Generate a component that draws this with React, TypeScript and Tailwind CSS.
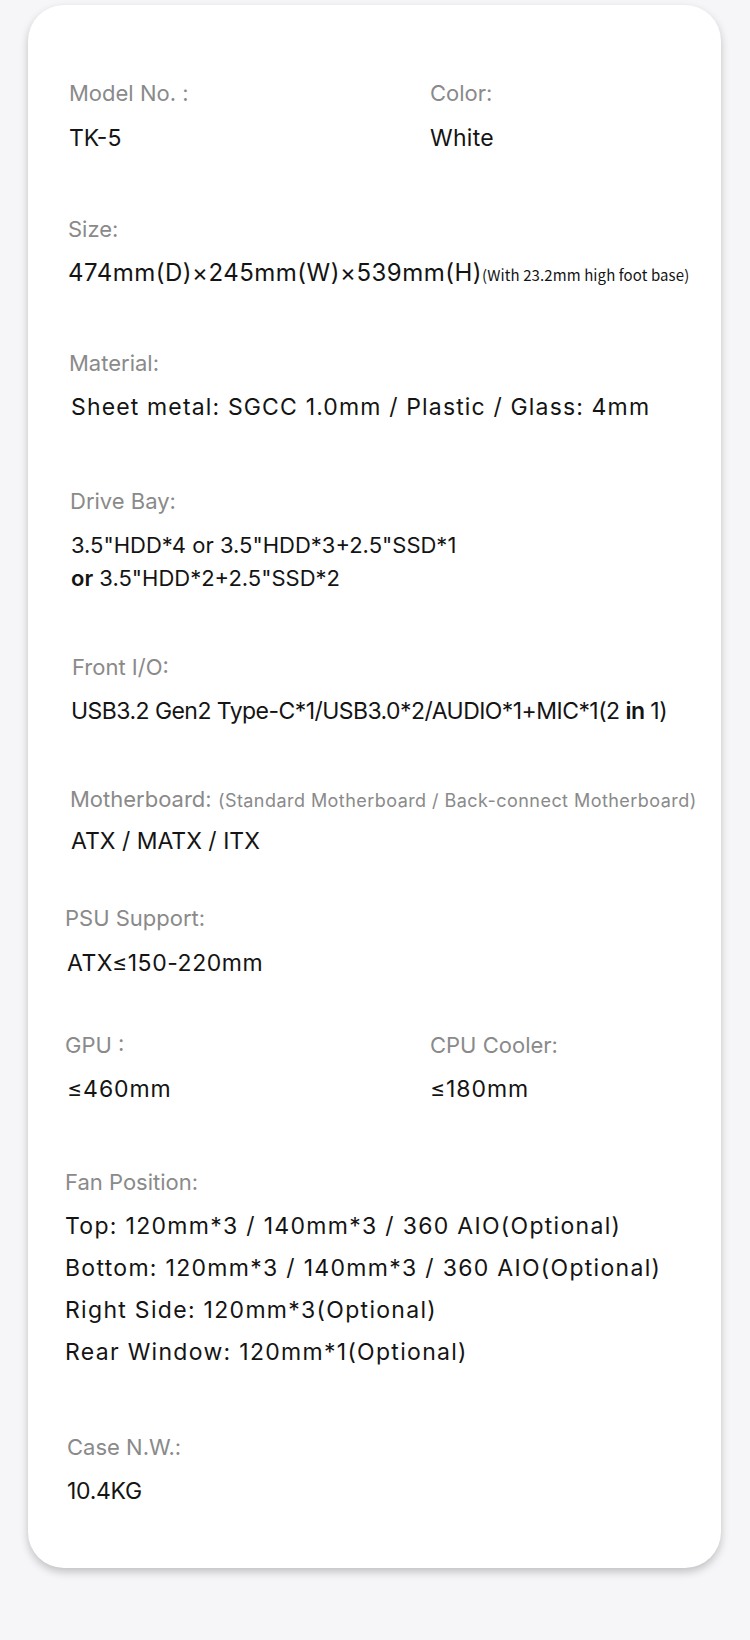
import React from 'react'

const label = "text-[22px] leading-[28px] text-[#8a8a8a]"
const value = "text-[23px] leading-[32px] text-[#141414]"

interface SpecProps {
  title: React.ReactNode
  lines: React.ReactNode[]
  className?: string
  titleClass?: string
  valueClass?: string
}

const Spec: React.FC<SpecProps> = ({ title, lines, className = "", titleClass = "", valueClass = "mt-[14px]" }) => {
  return (
    <div className={className}>
      <div className={`${label} ${titleClass}`}>{title}</div>
      <div className={valueClass}>
        {lines.map((l, i) => (
          <div key={i} className={value}>{l}</div>
        ))}
      </div>
    </div>
  )
}

export default function App() {
  return (
    <div className="min-h-[1640px] w-full bg-[#f6f6f9] pt-[5px] font-['Inter','Noto_Sans',sans-serif]">
      <div className="ml-[28px] w-[693px] rounded-[36px] bg-white pt-[74px] pb-[61px] pl-[41px] shadow-[0_4px_8px_rgba(0,0,0,0.22)]">
        <div className="flex">
          <div className="w-[361px]">
            <div className={label}>Model No. :</div>
            <div className={`${value} mt-[15px]`}>TK-5</div>
          </div>
          <div>
            <div className={label}>Color:</div>
            <div className={`${value} mt-[15px] tracking-[0.3px]`}>White</div>
          </div>
        </div>

        <div className="mt-[61px] -ml-[1px]">
          <div className={label}>Size:</div>
          <div className="mt-[14px] text-[24px] leading-[32px] tracking-[0.5px] text-[#141414]">
            474mm(D)×245mm(W)×539mm(H)
            <span className="font-['Noto_Sans_CJK_SC','Noto_Sans',sans-serif] text-[15px] leading-none tracking-[0.1px]">(With 23.2mm high foot base)</span>
          </div>
        </div>

        <Spec
          className="mt-[60px]"
          title="Material:"
          valueClass="mt-[14px] ml-[2px] tracking-[1.15px]"
          lines={["Sheet metal: SGCC 1.0mm / Plastic / Glass: 4mm"]}
        />

        <div className="mt-[64px] ml-[1px]">
          <div className={label}>Drive Bay:</div>
          <div className="mt-[14px] ml-[1px] text-[22px] leading-[33px] text-[#141414]">
            <div>3.5"HDD*4 or 3.5"HDD*3+2.5"SSD*1</div>
            <div><span className="font-semibold">or</span> 3.5"HDD*2+2.5"SSD*2</div>
          </div>
        </div>

        <div className="mt-[58px]">
          <div className={`${label} ml-[3px]`}>Front I/O:</div>
          <div className={`${value} mt-[14px] ml-[2px] tracking-[-0.55px]`}>
            USB3.2 Gen2 Type-C*1/USB3.0*2/AUDIO*1+MIC*1(2 <span className="font-semibold">in</span> 1)
          </div>
        </div>

        <div className="mt-[58px] ml-[1px]">
          <div className={label}>
            Motherboard: <span className="text-[18px] leading-[20px] tracking-[0.45px]">(Standard Motherboard / Back-connect Motherboard)</span>
          </div>
          <div className={`${value} mt-[12px] ml-[1px]`}>ATX / MATX / ITX</div>
        </div>

        <div className="mt-[47px] -ml-[4px]">
          <div className={label}>PSU Support:</div>
          <div className={`${value} mt-[15px] ml-[2px] tracking-[0.55px]`}>ATX≤150-220mm</div>
        </div>

        <div className="mt-[52px] -ml-[4px] flex">
          <div className="w-[365px]">
            <div className={label}>GPU :</div>
            <div className={`${value} mt-[14px] ml-[2px] tracking-[0.9px]`}>≤460mm</div>
          </div>
          <div>
            <div className={label}>CPU Cooler:</div>
            <div className={`${value} mt-[14px] tracking-[0.9px]`}>≤180mm</div>
          </div>
        </div>

        <div className="mt-[63px] -ml-[4px]">
          <div className={label}>Fan Position:</div>
          <div className="mt-[9px] text-[23px] leading-[42px] tracking-[1.3px] text-[#141414]">
            <div>Top: 120mm*3 / 140mm*3 / 360 AIO(Optional)</div>
            <div>Bottom: 120mm*3 / 140mm*3 / 360 AIO(Optional)</div>
            <div>Right Side: 120mm*3(Optional)</div>
            <div>Rear Window: 120mm*1(Optional)</div>
          </div>
        </div>

        <Spec
          className="mt-[60px] -ml-[2px]"
          title="Case N.W.:"
          valueClass="mt-[14px] tracking-[-0.3px]"
          lines={["10.4KG"]}
        />
      </div>
    </div>
  )
}
